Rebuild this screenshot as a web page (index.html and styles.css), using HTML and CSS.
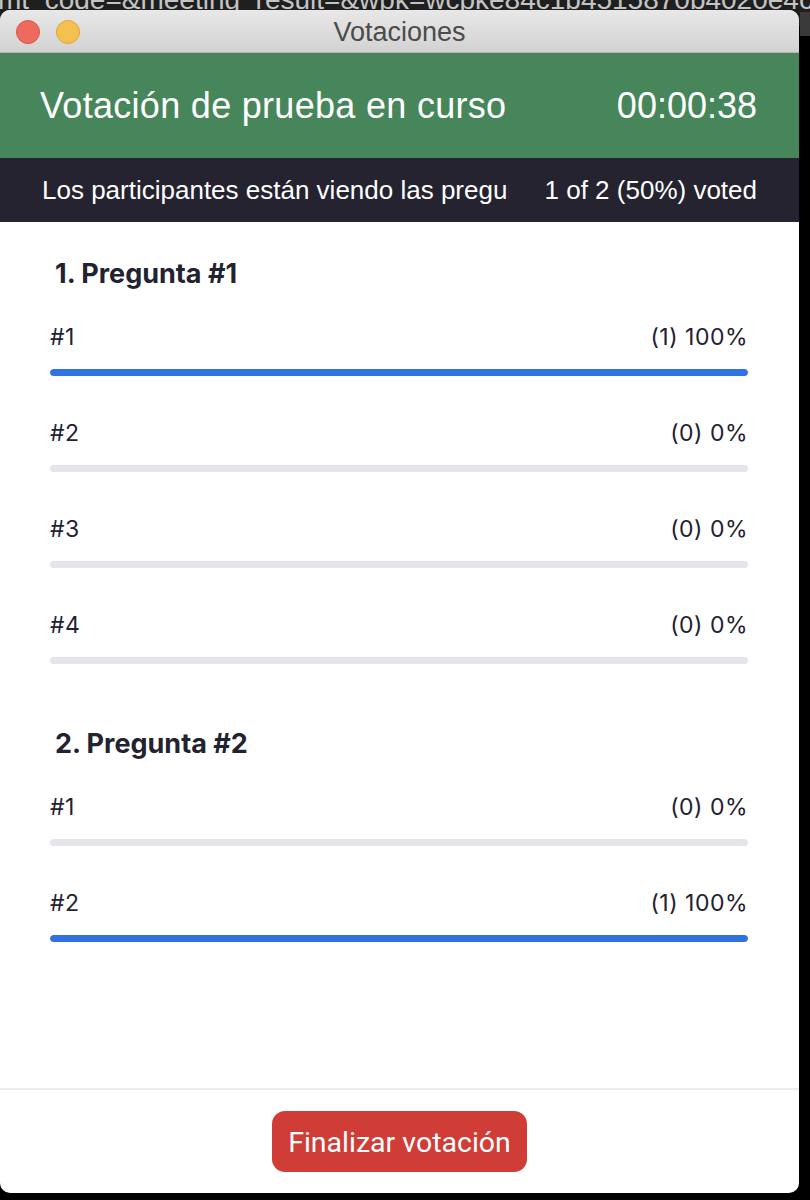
FILE: index.html
```html
<!DOCTYPE html>
<html lang="es">
<head>
<meta charset="utf-8">
<title>Votaciones</title>
<link rel="stylesheet" href="styles.css">
</head>
<body>
<div class="desktop">
  <div class="terminal">mt_code=&amp;meeting_result=&amp;wpk=wcpke84c1b4515870b4020e4c</div>
  <div class="scroll-stub"></div>
  <div class="window">
    <div class="titlebar">
      <div class="lights">
        <span class="light close"></span>
        <span class="light min"></span>
      </div>
      <div class="title">Votaciones</div>
    </div>
    <div class="header">
      <div class="header-title">Votación de prueba en curso</div>
      <div class="timer">00:00:38</div>
    </div>
    <div class="statusbar">
      <div class="status-text">Los participantes están viendo las preguntas</div>
      <div class="status-count">1 of 2 (50%) voted</div>
    </div>
    <div class="content">
      <section class="question">
        <h2 class="q-title">1. Pregunta #1</h2>
        <div class="option">
          <div class="opt-row"><span>#1</span><span>(1) 100%</span></div>
          <div class="bar"><div class="fill" style="width:100%"></div></div>
        </div>
        <div class="option">
          <div class="opt-row"><span>#2</span><span>(0) 0%</span></div>
          <div class="bar"><div class="fill" style="width:0%"></div></div>
        </div>
        <div class="option">
          <div class="opt-row"><span>#3</span><span>(0) 0%</span></div>
          <div class="bar"><div class="fill" style="width:0%"></div></div>
        </div>
        <div class="option">
          <div class="opt-row"><span>#4</span><span>(0) 0%</span></div>
          <div class="bar"><div class="fill" style="width:0%"></div></div>
        </div>
      </section>
      <section class="question">
        <h2 class="q-title">2. Pregunta #2</h2>
        <div class="option">
          <div class="opt-row"><span>#1</span><span>(0) 0%</span></div>
          <div class="bar"><div class="fill" style="width:0%"></div></div>
        </div>
        <div class="option">
          <div class="opt-row"><span>#2</span><span>(1) 100%</span></div>
          <div class="bar"><div class="fill" style="width:100%"></div></div>
        </div>
      </section>
    </div>
    <div class="footer">
      <button class="end-btn">Finalizar votación</button>
    </div>
  </div>
</div>
</body>
</html>
```

FILE: styles.css
```css
html, body {
  margin: 0;
  padding: 0;
  background: #000;
}

.desktop {
  position: relative;
  width: 810px;
  height: 1200px;
  overflow: hidden;
  background: #000;
}

.terminal {
  height: 40px;
  background: #1f1f1f;
  color: #c4c4c4;
  font-family: "Liberation Sans", Arial, sans-serif;
  font-size: 28px;
  line-height: 28px;
  white-space: nowrap;
  overflow: hidden;
  margin-top: -14px;
  text-indent: -2px;
}

.scroll-stub {
  position: absolute;
  left: 800px;
  top: 12px;
  width: 10px;
  height: 24px;
  background: #3a3a3a;
}

.window {
  position: absolute;
  left: 0;
  top: 10px;
  width: 799px;
  height: 1183px;
  background: #fff;
  border-radius: 10px;
  overflow: hidden;
  display: flex;
  flex-direction: column;
}

.titlebar {
  position: relative;
  height: 42px;
  flex: none;
  background: linear-gradient(#e8e8e8, #d2d2d2);
  border-bottom: 1px solid #b3b3b3;
  display: flex;
  align-items: center;
  justify-content: center;
}

.lights {
  position: absolute;
  left: 16px;
  top: 10px;
  display: flex;
  gap: 16px;
}

.light {
  width: 22px;
  height: 22px;
  border-radius: 50%;
  display: block;
}

.light.close {
  background: #ee6a5f;
  border: 1px solid #d65349;
}

.light.min {
  background: #f6c04f;
  border: 1px solid #dba539;
}

.title {
  font-family: "Liberation Sans", Arial, sans-serif;
  font-size: 27px;
  color: #4b4b4b;
  padding-top: 2px;
}

.header {
  height: 105px;
  flex: none;
  background: #47865a;
  color: #fff;
  display: flex;
  align-items: center;
  justify-content: space-between;
  padding: 0 42px 0 40px;
  font-family: "Liberation Sans", Arial, sans-serif;
  font-weight: 300;
  font-size: 36px;
}

.header-title {
  letter-spacing: 0.3px;
}

.statusbar {
  height: 64px;
  flex: none;
  background: #24232f;
  color: #fff;
  display: flex;
  align-items: center;
  padding: 0 42px 0 42px;
  font-family: "Liberation Sans", Arial, sans-serif;
  font-size: 26px;
}

.status-text {
  flex: 1;
  min-width: 0;
  white-space: nowrap;
  overflow: hidden;
}

.status-count {
  flex: none;
  margin-left: 36px;
  white-space: nowrap;
}

.content {
  flex: 1;
  padding: 37px 51px 0 50px;
  font-family: Inter, "Noto Sans", sans-serif;
  color: #23222f;
}

.question {
  margin-bottom: 65px;
}

.q-title {
  margin: 0 0 36px 5px;
  font-size: 27px;
  line-height: 30px;
  font-weight: 700;
  color: #23222f;
}

.option {
  margin-bottom: 45px;
}

.option:last-child {
  margin-bottom: 0;
}

.opt-row {
  display: flex;
  justify-content: space-between;
  font-size: 23px;
  letter-spacing: 0.5px;
  line-height: 24px;
}

.bar {
  margin-top: 20px;
  height: 7px;
  border-radius: 4px;
  background: #e4e4ea;
  overflow: hidden;
}

.fill {
  height: 100%;
  background: #2e73e0;
  border-radius: 4px;
}

.footer {
  flex: none;
  border-top: 2px solid #ececf1;
  padding: 21px 0 21px;
  display: flex;
  justify-content: center;
}

.end-btn {
  width: 255px;
  height: 61px;
  border: none;
  border-radius: 13px;
  background: #cf3d36;
  color: #fff;
  font-family: Roboto, "Liberation Sans", sans-serif;
  font-size: 28.5px;
  padding: 2px 0 0;
}
```
